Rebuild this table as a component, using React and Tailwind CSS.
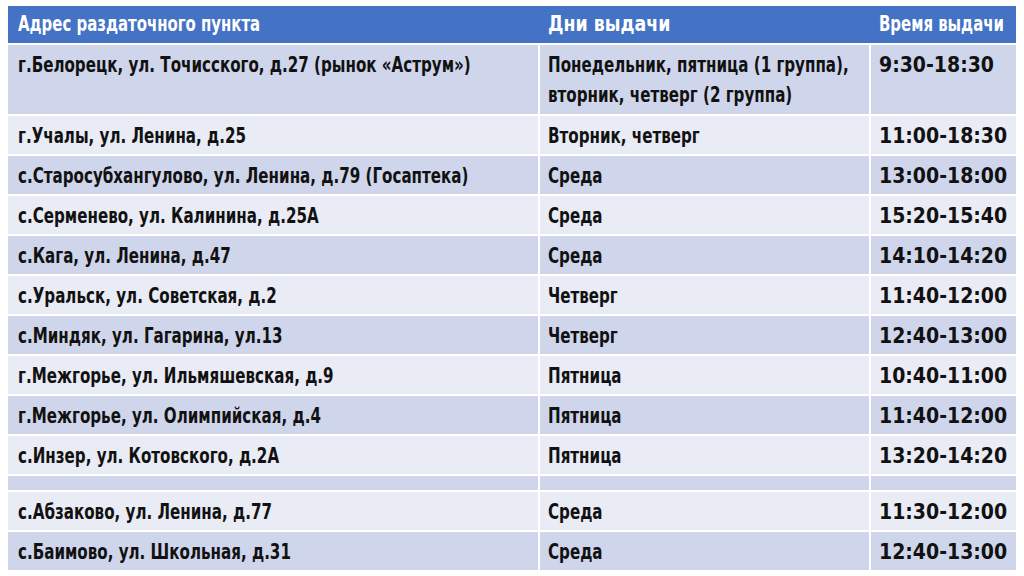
const rows = [
  { addr: 'г.Белорецк, ул. Точисского, д.27 (рынок «Аструм»)', days: ['Понедельник, пятница (1 группа),', 'вторник, четверг (2 группа)'], time: '9:30-18:30', tall: true },
  { addr: 'г.Учалы, ул. Ленина, д.25', days: ['Вторник, четверг'], time: '11:00-18:30' },
  { addr: 'с.Старосубхангулово, ул. Ленина, д.79 (Госаптека)', days: ['Среда'], time: '13:00-18:00' },
  { addr: 'с.Серменево, ул. Калинина, д.25А', days: ['Среда'], time: '15:20-15:40' },
  { addr: 'с.Кага, ул. Ленина, д.47', days: ['Среда'], time: '14:10-14:20' },
  { addr: 'с.Уральск, ул. Советская, д.2', days: ['Четверг'], time: '11:40-12:00' },
  { addr: 'с.Миндяк, ул. Гагарина, ул.13', days: ['Четверг'], time: '12:40-13:00' },
  { addr: 'г.Межгорье, ул. Ильмяшевская, д.9', days: ['Пятница'], time: '10:40-11:00' },
  { addr: 'г.Межгорье, ул. Олимпийская, д.4', days: ['Пятница'], time: '11:40-12:00' },
  { addr: 'с.Инзер, ул. Котовского, д.2А', days: ['Пятница'], time: '13:20-14:20' },
  { empty: true },
  { addr: 'с.Абзаково, ул. Ленина, д.77', days: ['Среда'], time: '11:30-12:00' },
  { addr: 'с.Баимово, ул. Школьная, д.31', days: ['Среда'], time: '12:40-13:00' },
]

const font = { fontFamily: '"DejaVu Sans Condensed", "DejaVu Sans", sans-serif' }

// narrow text like the condensed face of the original slide
function N({ children, cls = 'scale-x-[0.8]' }) {
  return <span className={`inline-block origin-left whitespace-nowrap ${cls}`}>{children}</span>
}

function Row({ r, dark }) {
  const bg = dark ? 'bg-[#cfd5ea]' : 'bg-[#e9ebf5]'
  const h = r.empty ? 'h-[14px]' : r.tall ? 'h-[69px]' : 'h-[38px]'
  const cell = `${bg} ${h} pt-[5px] leading-[30px] overflow-hidden`
  if (r.empty) {
    return (
      <div className="flex gap-[2px]">
        <div className={`${bg} ${h} w-[530px]`} />
        <div className={`${bg} ${h} w-[329px]`} />
        <div className={`${bg} ${h} flex-1`} />
      </div>
    )
  }
  return (
    <div className="flex gap-[2px]">
      <div className={`${cell} w-[530px] pl-[10px]`}><N>{r.addr}</N></div>
      <div className={`${cell} w-[329px] pl-[8px]`}>
        {r.days.map(d => <div key={d}><N>{d}</N></div>)}
      </div>
      <div className={`${cell} flex-1 pl-[8px]`}><N cls="scale-x-[1.0]">{r.time}</N></div>
    </div>
  )
}

export default function App() {
  return (
    <div className="w-[1024px] h-[576px] bg-white overflow-hidden pl-[8px] pr-[8px] pt-[6px]" style={font}>
      <div className="flex flex-col gap-[2px] text-[21px] font-bold text-[#111]">
        <div className="flex gap-[2px] bg-[#4472c4] text-white">
          <div className="w-[530px] h-[37px] pl-[10px] leading-[37px]"><N cls="scale-x-[0.79]">Адрес раздаточного пункта</N></div>
          <div className="w-[329px] h-[37px] pl-[8px] leading-[37px]"><N cls="scale-x-[0.92]">Дни выдачи</N></div>
          <div className="flex-1 h-[37px] pl-[8px] leading-[37px] overflow-hidden"><N cls="scale-x-[0.79]">Время выдачи</N></div>
        </div>
        {rows.map((r, i) => <Row key={i} r={r} dark={i % 2 === 0} />)}
      </div>
    </div>
  )
}
